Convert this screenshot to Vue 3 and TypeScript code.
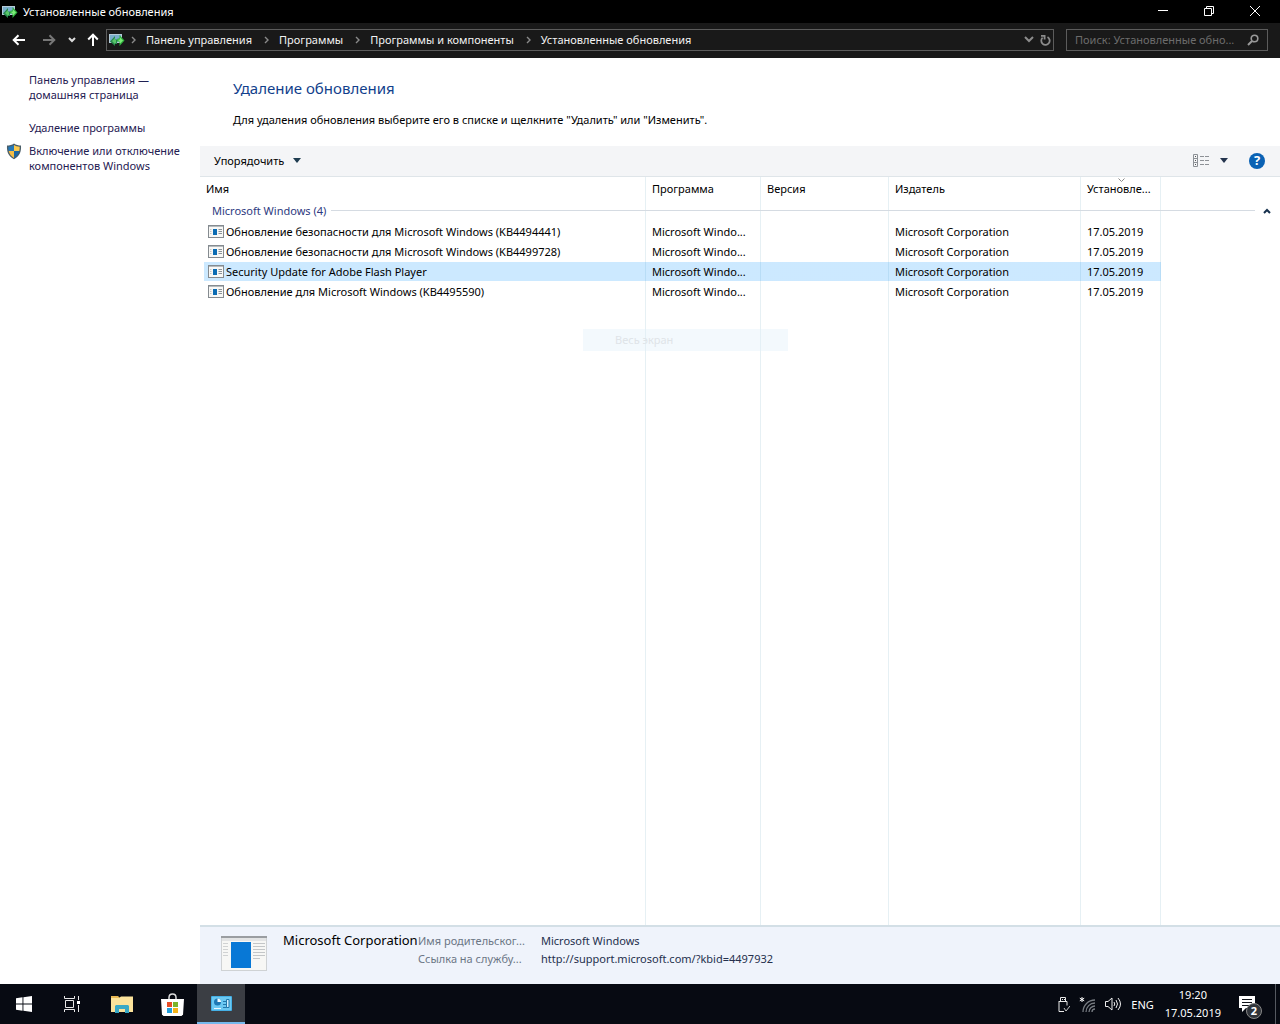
<script setup lang="ts">
interface Update {
  name: string
  program: string
  version: string
  publisher: string
  date: string
}

const crumbs: string[] = ['Панель управления', 'Программы', 'Программы и компоненты', 'Установленные обновления']

const updates: Update[] = [
  'Обновление безопасности для Microsoft Windows (KB4494441)',
  'Обновление безопасности для Microsoft Windows (KB4499728)',
  'Security Update for Adobe Flash Player',
  'Обновление для Microsoft Windows (KB4495590)',
].map((name) => ({
  name,
  program: 'Microsoft Windo...',
  version: '',
  publisher: 'Microsoft Corporation',
  date: '17.05.2019',
}))

const selected = 2
</script>

<template>
  <div class="screen">
    <header class="titlebar">
      <svg class="app-icon" width="16" height="14" viewBox="0 0 16 14">
        <rect x="0.5" y="1.5" width="12" height="8" fill="#79aecb" stroke="#b4cbd8" />
        <path d="M1 8.500l5-5.500v3.500h2V11H6v2z" fill="#27864c" />
        <path d="M3 8l3-3v2h1v3H6v1z" fill="#58c668" />
        <path d="M15.500 7.500L10.500 2v3.500H9c-1 0-1 2-1 3h2.500V13z" fill="#2fae3d" />
        <path d="M14 7.500L11 4.500v2H9.500v2H11v2z" fill="#7cec77" />
      </svg>
      <span class="title">Установленные обновления</span>
      <div class="window-buttons">
        <button aria-label="Свернуть"><svg width="12" height="12" viewBox="0 0 12 12"><path d="M1 5.500h10" /></svg></button>
        <button aria-label="Восстановить"><svg width="12" height="12" viewBox="0 0 12 12"><path d="M1.500 3.500h7v7h-7zM3.500 3.500v-2h7v7h-2" /></svg></button>
        <button aria-label="Закрыть"><svg width="12" height="12" viewBox="0 0 12 12"><path d="M1 1l10 10M11 1L1 11" /></svg></button>
      </div>
    </header>

    <nav class="navbar">
      <button class="nav-btn back" aria-label="Назад"><svg width="14" height="12" viewBox="0 0 14 12"><path d="M13 6H2M6.500 1.200L1.700 6l4.800 4.800" stroke="#fff" stroke-width="2" fill="none" /></svg></button>
      <button class="nav-btn forward" aria-label="Вперёд"><svg width="14" height="12" viewBox="0 0 14 12"><path d="M1 6h11M7.500 1.200L12.300 6l-4.800 4.800" stroke="#777" stroke-width="2" fill="none" /></svg></button>
      <button class="nav-btn recent" aria-label="Последние расположения"><svg width="8" height="6" viewBox="0 0 8 6"><path d="M1 1l3 3 3-3" stroke="#ddd" stroke-width="2" fill="none" /></svg></button>
      <button class="nav-btn up" aria-label="Вверх"><svg width="12" height="14" viewBox="0 0 12 14"><path d="M6 13V2M1.200 6.500L6 1.700l4.800 4.800" stroke="#fff" stroke-width="2" fill="none" /></svg></button>
      <div class="address">
        <svg class="app-icon" width="16" height="14" viewBox="0 0 16 14">
          <rect x="0.5" y="1.5" width="12" height="8" fill="#79aecb" stroke="#b4cbd8" />
          <path d="M1 8.500l5-5.500v3.500h2V11H6v2z" fill="#27864c" />
          <path d="M3 8l3-3v2h1v3H6v1z" fill="#58c668" />
          <path d="M15.500 7.500L10.500 2v3.500H9c-1 0-1 2-1 3h2.500V13z" fill="#2fae3d" />
          <path d="M14 7.500L11 4.500v2H9.500v2H11v2z" fill="#7cec77" />
        </svg>
        <template v-for="c in crumbs" :key="c">
          <svg class="sep" width="5" height="8" viewBox="0 0 5 8"><path d="M1 1l3 3-3 3" stroke="#8a8a8a" stroke-width="1.400" fill="none" /></svg>
          <a href="#">{{ c }}</a>
        </template>
        <button class="addr-btn drop" aria-label="Предыдущие расположения"><svg width="10" height="7" viewBox="0 0 10 7"><path d="M1 1l4 4 4-4" stroke="#8c8c8c" stroke-width="2" fill="none" /></svg></button>
        <button class="addr-btn" aria-label="Обновить"><svg width="11" height="12" viewBox="0 0 11 12"><path d="M7.500 3A4.200 4.200 0 1 1 2.600 3.600M1 1.800h3.600v3.600" stroke="#8c8c8c" stroke-width="1.800" fill="none" /></svg></button>
      </div>
      <label class="search">
        <input type="text" aria-label="Поиск" placeholder="Поиск: Установленные обно..." />
        <svg width="12" height="12" viewBox="0 0 12 12"><circle cx="7.500" cy="4.500" r="3.300" stroke="#999" stroke-width="1.600" fill="none" /><path d="M5 7l-4 4" stroke="#999" stroke-width="2" /></svg>
      </label>
    </nav>

    <div class="body">
      <aside class="sidebar">
        <a href="#" class="home">Панель управления —<br />домашняя страница</a>
        <a href="#">Удаление программы</a>
        <div class="shielded">
          <svg width="16" height="17" viewBox="0 0 16 17">
            <path d="M8 0.500C6 2 3.500 2.600 1 2.600c-.4 6.400 1.500 11 7 13.700 5.500-2.700 7.400-7.300 7-13.700-2.500 0-5-.6-7-2.100z" fill="#4a5d68" />
            <path d="M8 2C6.300 3 4.500 3.600 2.300 3.700c0 1.600.1 3 .4 4.300H8z" fill="#2478b8" />
            <path d="M8 2c1.700 1 3.500 1.600 5.700 1.700 0 1.600-.1 3-.4 4.300H8z" fill="#fbc94d" />
            <path d="M2.700 8c.7 3 2.300 5.300 5.300 7V8z" fill="#f4bd45" />
            <path d="M13.300 8c-.7 3-2.300 5.300-5.300 7V8z" fill="#1c67a4" />
          </svg>
          <a href="#">Включение или отключение<br />компонентов Windows</a>
        </div>
      </aside>

      <main class="content">
        <section class="intro">
          <h1>Удаление обновления</h1>
          <p>Для удаления обновления выберите его в списке и щелкните "Удалить" или "Изменить".</p>
        </section>

        <div class="toolbar">
          <button class="organize">Упорядочить <svg width="8" height="5" viewBox="0 0 8 5"><path d="M0 0h8L4 5z" fill="#1e3c50" /></svg></button>
          <button class="view" aria-label="Представление">
            <svg width="17" height="13" viewBox="0 0 17 13" fill="none" stroke="#8d9196">
              <path d="M0.500 0.500h4v12h-4zM0.500 4.500h4M0.500 8.500h4" />
              <path d="M2 2.500h1M2 6.500h1M2 10.500h1" stroke="#555" />
              <path d="M7 2.500h4M12 2.500h4M7 6.500h4M12 6.500h4M7 10.500h4M12 10.500h4" />
            </svg>
          </button>
          <button class="view-drop" aria-label="Другие представления"><svg width="8" height="5" viewBox="0 0 8 5"><path d="M0 0h8L4 5z" fill="#24344e" /></svg></button>
          <button class="help" aria-label="Справка">?</button>
        </div>

        <div class="list">
          <table>
            <colgroup>
              <col class="c-name" /><col class="c-program" /><col class="c-version" /><col class="c-publisher" /><col class="c-date" /><col />
            </colgroup>
            <thead>
              <tr>
                <th>Имя</th>
                <th>Программа</th>
                <th>Версия</th>
                <th>Издатель</th>
                <th class="sorted">Установле...<svg width="7" height="4" viewBox="0 0 7 4"><path d="M0.500 0.500l3 3 3-3" stroke="#8b8b8b" fill="none" /></svg></th>
                <td></td>
              </tr>
            </thead>
            <tbody>
              <tr class="group">
                <th colspan="6" scope="rowgroup">
                  <div>
                    <span>Microsoft Windows (4)</span><i></i>
                    <svg width="8" height="6" viewBox="0 0 8 6"><path d="M1 5l3-3 3 3" stroke="#16304d" stroke-width="2" fill="none" /></svg>
                  </div>
                </th>
              </tr>
              <tr v-for="(u, i) in updates" :key="u.name" class="row" :class="{ selected: i === selected }">
                <td class="name">
                  <div>
                    <svg width="16" height="13" viewBox="0 0 16 13">
                      <rect x="0.500" y="0.500" width="15" height="12" fill="#f8f8f6" stroke="#858b90" />
                      <path d="M1 1.500h14" stroke="#b5babd" />
                      <rect x="5" y="4" width="4" height="6" fill="#0b6cb3" />
                      <path d="M10.500 4.500H14M10.500 6.500H14M10.500 8.500H14" stroke="#8b9297" />
                      <path d="M2 4.500h1.500M2 6.500h1.500M2 8.500h1.500" stroke="#c8c8c8" />
                    </svg>
                    {{ u.name }}
                  </div>
                </td>
                <td>{{ u.program }}</td>
                <td>{{ u.version }}</td>
                <td>{{ u.publisher }}</td>
                <td>{{ u.date }}</td>
                <td class="rest"></td>
              </tr>
              <tr class="filler"><td colspan="6"></td></tr>
            </tbody>
          </table>
          <div class="ghost">Весь экран</div>
        </div>

        <footer class="details">
          <svg width="46" height="35" viewBox="0 0 46 35">
            <rect x="0.500" y="0.500" width="45" height="34" fill="#f7f7f5" stroke="#cfd2d4" />
            <rect width="46" height="2" fill="#9a9da1" />
            <rect x="1" y="2" width="44" height="3" fill="#e3e4e5" />
            <path d="M2 7.500h5M2 10.500h5M2 13.500h5M2 16.500h5M2 19.500h5" stroke="#d0d2d3" />
            <rect x="10" y="6" width="20" height="26" fill="#0878d6" />
            <path d="M32 7.500h12M32 10.500h12M32 13.500h12M32 16.500h12M32 19.500h12M32 22.500h7" stroke="#c3c6c8" />
          </svg>
          <strong>Microsoft Corporation</strong>
          <dl>
            <dt>Имя родительског...</dt><dd>Microsoft Windows</dd>
            <dt>Ссылка на службу...</dt><dd>http://support.microsoft.com/?kbid=4497932</dd>
          </dl>
        </footer>
      </main>
    </div>

    <footer class="taskbar">
      <button class="task" aria-label="Пуск"><svg width="16" height="16" viewBox="0 0 16 16" fill="#fff"><path d="M0 2.200L6.500 1.300V7.500H0zM7.400 1.200L16 0v7.500H7.400zM0 8.400h6.500v6.300L0 13.800zM7.400 8.400H16V16l-8.600-1.200z" /></svg></button>
      <button class="task" aria-label="Представление задач"><svg width="16" height="16" viewBox="0 0 16 16" fill="none" stroke="#e8e8e8"><path d="M0.500 0v2.500h10V0M1.500 4.500h8v7h-8zM0.500 16v-2.500h10V16M14.500 0v4M14.500 9v7" /><path d="M13 5h3v3h-3z" fill="#fff" stroke="none" /></svg></button>
      <button class="task explorer" aria-label="Проводник"><svg width="22" height="18" viewBox="0 0 22 18"><path d="M0 1h7l2 2h12v14H0z" fill="#e8b854" /><path d="M0 3h8l2-1.500h12V17H0z" fill="#fbe39b" /><path d="M4 18v-7l1-1h12l1 1v7h-4v-4H8v4z" fill="#39a9c6" /></svg></button>
      <button class="task" aria-label="Магазин"><svg width="23" height="23" viewBox="0 0 23 23"><path d="M8 7V4.500C8 2.500 9.500 1 11.500 1S15 2.500 15 4.500V7" stroke="#ddd" stroke-width="1.500" fill="none" /><path d="M0 6h23l-1 15.500-1.500 1.500h-18L1 21.500z" fill="#fff" /><path d="M6 9h5v5H6z" fill="#e74c25" /><path d="M12 9h5v5h-5z" fill="#7cb42b" /><path d="M6 15h5v5H6z" fill="#219fdc" /><path d="M12 15h5v5h-5z" fill="#f5b51b" /></svg></button>
      <button class="task active" aria-label="Панель управления"><svg width="21" height="15" viewBox="0 0 21 15"><rect width="21" height="15" rx="1" fill="#45b0e6" /><rect x="1" y="1" width="19" height="13" fill="#6bc8f2" /><circle cx="6.500" cy="6" r="3.500" fill="#1d78b5" /><path d="M6.500 6V2.500A3.500 3.500 0 0 1 10 6z" fill="#f4fbff" /><path d="M3 12.500h7" stroke="#eaf8ff" /><path d="M12 5.500h3M12 8.500h3M12 11.500h6" stroke="#2178ad" /><path d="M15.500 3.500h2.500v8h-2.500z" stroke="#2178ad" fill="#d3f0ff" /></svg></button>
      <div class="tray">
        <button aria-label="Безопасное извлечение устройства"><svg width="13" height="17" viewBox="0 0 13 17" fill="none" stroke="#e8e8e8"><path d="M3.500 5.500v-4h5v4M2 5.500h8v4M2 5v10.500h5M5 3.500h1M7 3.500h1" /><path d="M7 12l2 3 4-5" stroke="#c8c8c8" /></svg></button>
        <button aria-label="Сеть"><svg width="17" height="17" viewBox="0 0 17 17" fill="none" stroke="#777c82" stroke-width="1.300"><path d="M4 16A12 12 0 0 1 16 4M7 16a9 9 0 0 1 9-9M10 16a6 6 0 0 1 6-6M13 16a3 3 0 0 1 3-3" /><path d="M3 1v5M0.800 2.200l4.400 2.600M5.200 2.200L0.800 4.800" stroke="#fff" stroke-width="1" /></svg></button>
        <button aria-label="Громкость"><svg width="17" height="14" viewBox="0 0 17 14" fill="none" stroke="#eee"><path d="M0.500 4.500H3l4-3.500v12L3 9.500H0.500zM9 5q1.500 2 0 4M11 3q3 4 0 8M13 1q5 6 0 12" /></svg></button>
        <button class="lang">ENG</button>
        <button class="clock">19:20<br />17.05.2019</button>
        <button class="notify" aria-label="Уведомления">
          <svg width="17" height="17" viewBox="0 0 17 17"><path d="M0 0h16v12H7l-4 4v-4H0z" fill="#fff" /><path d="M3 3.500h10M3 6.500h10M3 9.500h7" stroke="#10131a" /></svg>
          <span>2</span>
        </button>
      </div>
    </footer>
  </div>
</template>

<style>
body {
  background: #fff;
}
</style>

<style scoped>
.screen {
  min-height: 100vh;
  display: flex;
  flex-direction: column;
  font: 11px/15px "Noto Sans", "Open Sans", sans-serif;
  color: #000;
  overflow: hidden;
}
.screen * {
  box-sizing: border-box;
}
svg {
  display: block;
  flex: none;
}
button {
  display: flex;
  align-items: center;
  justify-content: center;
  border: 0;
  padding: 0;
  background: none;
  font: inherit;
  color: inherit;
}
a {
  color: inherit;
  text-decoration: none;
}
.titlebar {
  height: 23px;
  background: #000;
  color: #fff;
  display: flex;
  align-items: center;
  padding-left: 2px;
}
.title {
  margin-left: 5px;
}
.window-buttons {
  display: flex;
  height: 21px;
  align-self: flex-start;
  margin-left: auto;
  margin-right: 2px;
}
.window-buttons button {
  width: 46px;
}
.window-buttons path {
  stroke: #fff;
  fill: none;
}
.navbar {
  height: 35px;
  background: #191919;
  display: flex;
  align-items: center;
  padding: 0 12px 1px;
}
.back {
  width: 14px;
}
.forward {
  width: 14px;
  margin-left: 16px;
}
.recent {
  width: 8px;
  margin-left: 12px;
}
.up {
  width: 12px;
  margin-left: 11px;
  margin-right: 7px;
}
.address {
  flex: 1;
  min-width: 0;
  height: 22px;
  border: 1px solid #5c5c5c;
  display: flex;
  align-items: center;
  padding: 0 2px 1px;
  color: #f2f2f2;
  white-space: nowrap;
}
.address .sep {
  margin: 0 10px 0 12px;
}
.address .app-icon {
  margin-right: -6px;
}
.addr-btn {
  width: 11px;
}
.addr-btn.drop {
  margin-left: auto;
  margin-right: 6px;
}
.search {
  width: 202px;
  height: 22px;
  margin-left: 12px;
  border: 1px solid #5c5c5c;
  display: flex;
  align-items: center;
  padding: 0 8px 1px;
}
.search input {
  flex: 1;
  min-width: 0;
  border: 0;
  padding: 0;
  outline: 0;
  background: none;
  font: inherit;
  color: #eee;
}
.search input::placeholder {
  color: #6c6c6c;
  opacity: 1;
}
.body {
  flex: 1;
  display: flex;
}
.sidebar {
  width: 200px;
  flex: none;
  padding: 14px 8px 0 29px;
  color: #1f2052;
  display: flex;
  flex-direction: column;
  gap: 8px;
  white-space: nowrap;
}
.sidebar .home {
  margin-bottom: 10px;
}
.shielded {
  display: flex;
  gap: 7px;
  margin-left: -23px;
}
.content {
  flex: 1;
  min-width: 0;
  display: flex;
  flex-direction: column;
}
.intro {
  height: 88px;
  padding: 19px 33px 0;
}
h1 {
  margin: 0;
  font-size: 15px;
  font-weight: 400;
  line-height: 22px;
  color: #123f8c;
}
.intro p {
  margin: 13px 0 0;
}
.toolbar {
  height: 31px;
  background: #f4f5f7;
  border-bottom: 1px solid #dfe5e9;
  display: flex;
  align-items: center;
  padding: 0 15px 1px 14px;
}
.organize {
  gap: 9px;
}
.view {
  margin-left: auto;
}
.view-drop {
  width: 28px;
}
.help {
  width: 16px;
  height: 16px;
  margin-left: 11px;
  border-radius: 50%;
  background: #0a62b4;
  color: #fff;
  font-size: 13px;
  font-weight: 700;
}
.list {
  flex: 1;
  display: grid;
  position: relative;
}
table {
  width: 100%;
  height: 100%;
  table-layout: fixed;
  border-collapse: collapse;
  background: linear-gradient(
    90deg,
    transparent 445px,
    #e6f0f4 445px 446px,
    transparent 446px 560px,
    #e6f0f4 560px 561px,
    transparent 561px 688px,
    #e6f0f4 688px 689px,
    transparent 689px 880px,
    #e6f0f4 880px 881px,
    transparent 881px 960px,
    #e6f0f4 960px 961px,
    transparent 961px
  );
}
.c-name {
  width: 446px;
}
.c-program {
  width: 115px;
}
.c-version {
  width: 128px;
}
.c-publisher {
  width: 192px;
}
.c-date {
  width: 80px;
}
th,
td {
  padding: 0 6px;
  text-align: left;
  font-weight: 400;
  white-space: nowrap;
}
thead tr {
  height: 23px;
}
.sorted {
  position: relative;
}
.sorted svg {
  position: absolute;
  left: 37px;
  top: 1px;
}
.group {
  height: 21px;
  color: #2d3a80;
}
.group th {
  padding: 0 9px 0 12px;
}
.group div {
  display: flex;
  align-items: center;
}
.group i {
  flex: 1;
  height: 1px;
  background: #d5dbe2;
  margin: 0 8px 0 5px;
}
.row {
  height: 20px;
}
.row .name {
  padding: 0 0 0 4px;
}
.name div {
  height: 19px;
  display: flex;
  align-items: center;
  gap: 2px;
  padding-left: 4px;
}
.selected .name div {
  background: rgba(0, 144, 255, 0.2);
}
.selected td:not(.name, .rest) {
  background: linear-gradient(rgba(0, 144, 255, 0.2), rgba(0, 144, 255, 0.2)) center / 100% 19px no-repeat;
}
.ghost {
  position: absolute;
  left: 383px;
  top: 152px;
  width: 205px;
  height: 22px;
  padding-left: 32px;
  line-height: 22px;
  background: rgba(225, 240, 250, 0.4);
  color: #dfe4e8;
}
.details {
  height: 59px;
  background: #eff3fb;
  border-top: 2px solid #d3dfe6;
  display: flex;
  padding: 9px 21px 0;
}
.details strong {
  width: 135px;
  margin-left: 16px;
  margin-top: -5px;
  font-size: 13px;
  font-weight: 400;
  line-height: 18px;
  white-space: nowrap;
}
.details dl {
  display: grid;
  grid-template-columns: 111px auto;
  grid-auto-rows: 18px;
  column-gap: 12px;
  margin: -4px 0 0;
  line-height: 18px;
  white-space: nowrap;
}
dt {
  color: #6b7685;
}
dd {
  margin: 0;
  color: #25304d;
}
.taskbar {
  height: 40px;
  background: #070a12;
  color: #fff;
  display: flex;
}
.task {
  width: 48px;
}
.task.explorer {
  width: 52px;
}
.task.active {
  margin-left: 1px;
  background: #3b3e44;
  border-bottom: 2px solid #76b9ed;
}
.tray {
  display: flex;
  margin-left: auto;
  align-items: center;
  gap: 9px;
  padding-right: 4px;
}
.tray button {
  height: 40px;
}
.tray .clock {
  display: block;
  line-height: 18px;
  margin: 0 9px 0 2px;
}
.notify {
  position: relative;
  width: 37px;
  justify-content: flex-start;
  border-right: 1px solid #555960;
}
.notify span {
  position: absolute;
  left: 7px;
  top: 19px;
  width: 16px;
  height: 16px;
  border-radius: 50%;
  border: 1px solid #888;
  background: #30343a;
  line-height: 14px;
  font-weight: 700;
}
</style>
